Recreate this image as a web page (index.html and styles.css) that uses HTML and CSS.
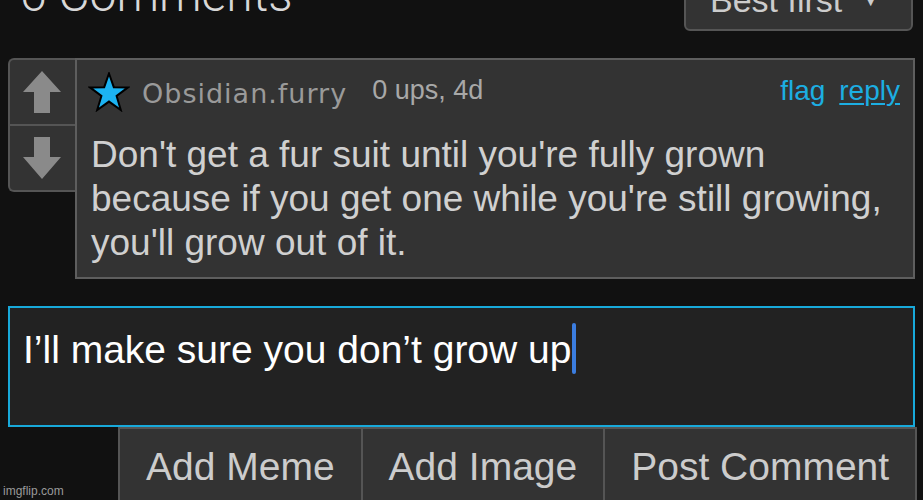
FILE: index.html
```html
<!DOCTYPE html>
<html>
<head>
<meta charset="utf-8">
<link rel="stylesheet" href="styles.css">
</head>
<body>
<div class="page">
  <div class="header">
    <div class="count">6 Comments</div>
    <div class="sort">Best first <span class="caret-down">▼</span></div>
  </div>

  <div class="comment">
    <div class="votes">
      <div class="vote">
        <svg width="40" height="42" viewBox="0 0 40 42"><path d="M20 0 L39 21 L28 21 L28 42 L12 42 L12 21 L1 21 Z" fill="#8a8a8a"/></svg>
      </div>
      <div class="vote down">
        <svg width="40" height="42" viewBox="0 0 40 42"><path d="M12 0 L28 0 L28 20 L39 20 L20 42 L1 20 L12 20 Z" fill="#8a8a8a"/></svg>
      </div>
    </div>
    <div class="content">
      <div class="meta">
        <svg class="star" width="42" height="40" viewBox="0 0 42 40"><path d="M21 1.5 L25.8 15.2 L40 15.4 L28.6 24 L32.8 38 L21 29.6 L9.2 38 L13.4 24 L2 15.4 L16.2 15.2 Z" fill="#1cb3f2" stroke="#000" stroke-width="2" stroke-linejoin="miter"/></svg>
        <span class="user">Obsidian.furry</span>
        <span class="info">0 ups, 4d</span>
        <span class="actions"><a class="flag">flag</a><a class="reply">reply</a></span>
      </div>
      <div class="body">Don't get a fur suit until you're fully grown<br>because if you get one while you're still growing,<br>you'll grow out of it.</div>
    </div>
  </div>

  <div class="input">I’ll make sure you don’t grow up<span class="cursor"></span></div>

  <div class="buttons">
    <div class="btn">Add Meme</div>
    <div class="btn">Add Image</div>
    <div class="btn">Post Comment</div>
  </div>
</div>
<div class="watermark">imgflip.com</div>
</body>
</html>
```

FILE: styles.css
```css
html, body {
  margin: 0;
  padding: 0;
  background: #111111;
  overflow: hidden;
  height: 500px;
}
body {
  font-family: "Liberation Sans", Arial, sans-serif;
  color: #cccccc;
  position: relative;
}
.page {
  padding: 0 8px;
}
.header {
  display: flex;
  justify-content: space-between;
  align-items: flex-end;
  height: 31px;
  margin-bottom: 27px;
}
.count {
  font-family: "Roboto", "Liberation Sans", sans-serif;
  font-weight: 300;
  font-size: 48px;
  line-height: 48px;
  color: #d8d8d8;
  margin-left: 12px;
  align-self: flex-start;
  margin-top: -29px;
}
.sort {
  width: 229px;
  height: 50px;
  box-sizing: border-box;
  border: 2px solid #555;
  border-radius: 6px;
  background: #333;
  color: #ccc;
  font-size: 34px;
  line-height: 34px;
  padding: 0 0 0 24px;
  margin-right: 2px;
  margin-top: -19px;
}
.caret-down {
  font-size: 14px;
  vertical-align: 6px;
  margin-left: 12px;
}
.comment {
  display: flex;
  align-items: flex-start;
}
.votes {
  width: 67px;
  box-sizing: border-box;
  border: 2px solid #555;
  border-right: none;
  border-radius: 6px 0 0 6px;
  background: #333;
  flex-shrink: 0;
}
.vote {
  height: 64px;
  display: flex;
  align-items: center;
  justify-content: center;
  padding-right: 2px;
}
.vote.down {
  border-top: 2px solid #555;
}
.content {
  flex: 1;
  border: 2px solid #5e5e5e;
  background: #333333;
  padding: 0 13px 12px 11px;
}
.meta {
  display: flex;
  align-items: center;
  height: 40px;
  margin-top: 12px;
}
.star {
  display: block;
  margin-right: 12px;
}
.user {
  font-family: "DejaVu Sans", Verdana, sans-serif;
  font-size: 27px;
  letter-spacing: 1px;
  color: #9a9a9a;
  margin-top: 2px;
}
.info {
  font-size: 27px;
  color: #a8a8a8;
  margin-left: 25px;
  margin-top: -4px;
}
.actions {
  margin-left: auto;
  font-size: 28px;
  color: #1caee2;
  margin-top: -2px;
}
.actions a {
  margin-left: 14px;
}
.reply {
  text-decoration: underline;
  text-underline-offset: 3px;
  text-decoration-thickness: 2px;
}
.body {
  font-size: 37px;
  line-height: 44px;
  color: #d0d0d0;
  margin-top: 21px;
  padding-left: 3px;
}
.input {
  margin-top: 27px;
  height: 121px;
  box-sizing: border-box;
  border: 2px solid #18a9da;
  background: #222222;
  color: #ffffff;
  font-size: 39px;
  line-height: 46px;
  padding: 15px 13px 0;
}
.cursor {
  display: inline-block;
  width: 4px;
  height: 51px;
  background: #3b7de0;
  border-radius: 2px;
  vertical-align: -11px;
  margin-left: 1px;
}
.buttons {
  display: flex;
  margin-left: 110px;
}
.btn {
  box-sizing: border-box;
  border: 2px solid #555;
  border-right: none;
  background: #333333;
  color: #cccccc;
  font-size: 39px;
  line-height: 46px;
  padding: 15px 26px 20px;
  white-space: nowrap;
}
.btn:last-child {
  border-right: 2px solid #555;
  flex: 1;
  text-align: center;
}
.watermark {
  position: absolute;
  left: 3px;
  top: 484px;
  font-size: 12px;
  color: #9a9a9a;
}
```
